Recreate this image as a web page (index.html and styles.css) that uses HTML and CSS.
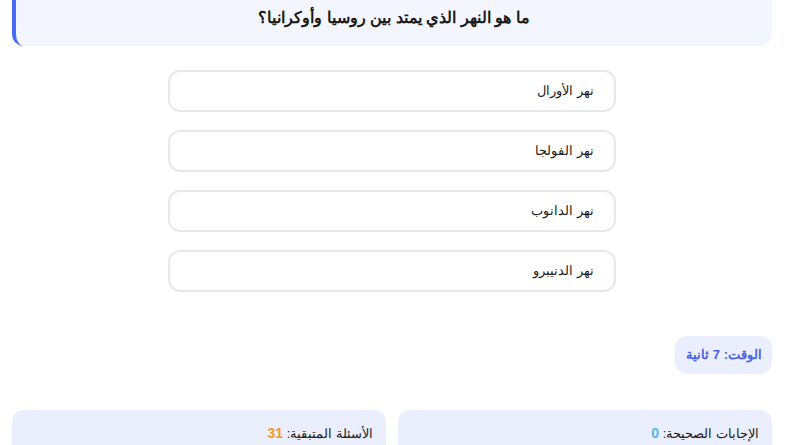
FILE: index.html
```html
<!DOCTYPE html>
<html lang="ar" dir="rtl">
<head>
<meta charset="utf-8">
<link rel="stylesheet" href="styles.css">
</head>
<body>
<div class="quiz">
  <div class="question">ما هو النهر الذي يمتد بين روسيا وأوكرانيا؟</div>
  <div class="options">
    <div class="option">نهر الأورال</div>
    <div class="option">نهر الفولجا</div>
    <div class="option">نهر الدانوب</div>
    <div class="option">نهر الدنيبرو</div>
  </div>
  <div class="timer-row">
    <div class="timer">الوقت: <span>7</span> ثانية</div>
  </div>
  <div class="stats">
    <div class="stat">الإجابات الصحيحة: <span class="num correct">0</span></div>
    <div class="stat">الأسئلة المتبقية: <span class="num left">31</span></div>
  </div>
</div>
</body>
</html>
```
FILE: styles.css
```css
html, body {
  margin: 0;
  padding: 0;
  background: #ffffff;
}
body {
  font-family: "Liberation Sans", Arial, sans-serif;
  color: #222;
}
.quiz {
  margin: -21px 18px 0 12px;
  display: flex;
  flex-direction: column;
}
.question {
  background: #f3f6fe;
  border-left: 4px solid #4a6cf7;
  border-radius: 12px;
  padding: 26px 20px 15px;
  text-align: center;
  font-size: 16px;
  font-weight: bold;
  color: #1a1a1a;
  line-height: 26px;
}
.options {
  margin-top: 24px;
  display: flex;
  flex-direction: column;
  align-items: center;
  gap: 18px;
}
.option {
  width: 448px;
  box-sizing: border-box;
  height: 42px;
  border: 2px solid #e6e8ec;
  border-radius: 12px;
  padding: 0 20px 1px;
  display: flex;
  align-items: center;
  font-size: 13px;
  color: #222;
  background: #fff;
}
.timer-row {
  margin-top: 44px;
  display: flex;
}
.timer {
  background: #ebeffd;
  color: #4a63e6;
  font-weight: bold;
  font-size: 13px;
  border-radius: 12px;
  height: 38px;
  line-height: 38px;
  padding: 0 10px 0 11px;
}
.stats {
  margin-top: 36px;
  display: grid;
  grid-template-columns: 1fr 1fr;
  gap: 12px;
}
.stat {
  background: #ebeefc;
  border-radius: 12px;
  height: 60px;
  padding: 14px 13px 0;
  font-size: 13px;
  color: #222;
  line-height: 18px;
}
.num {
  font-weight: bold;
  font-size: 14px;
}
.correct { color: #4fb8ef; }
.left { color: #f39a1f; }
```
